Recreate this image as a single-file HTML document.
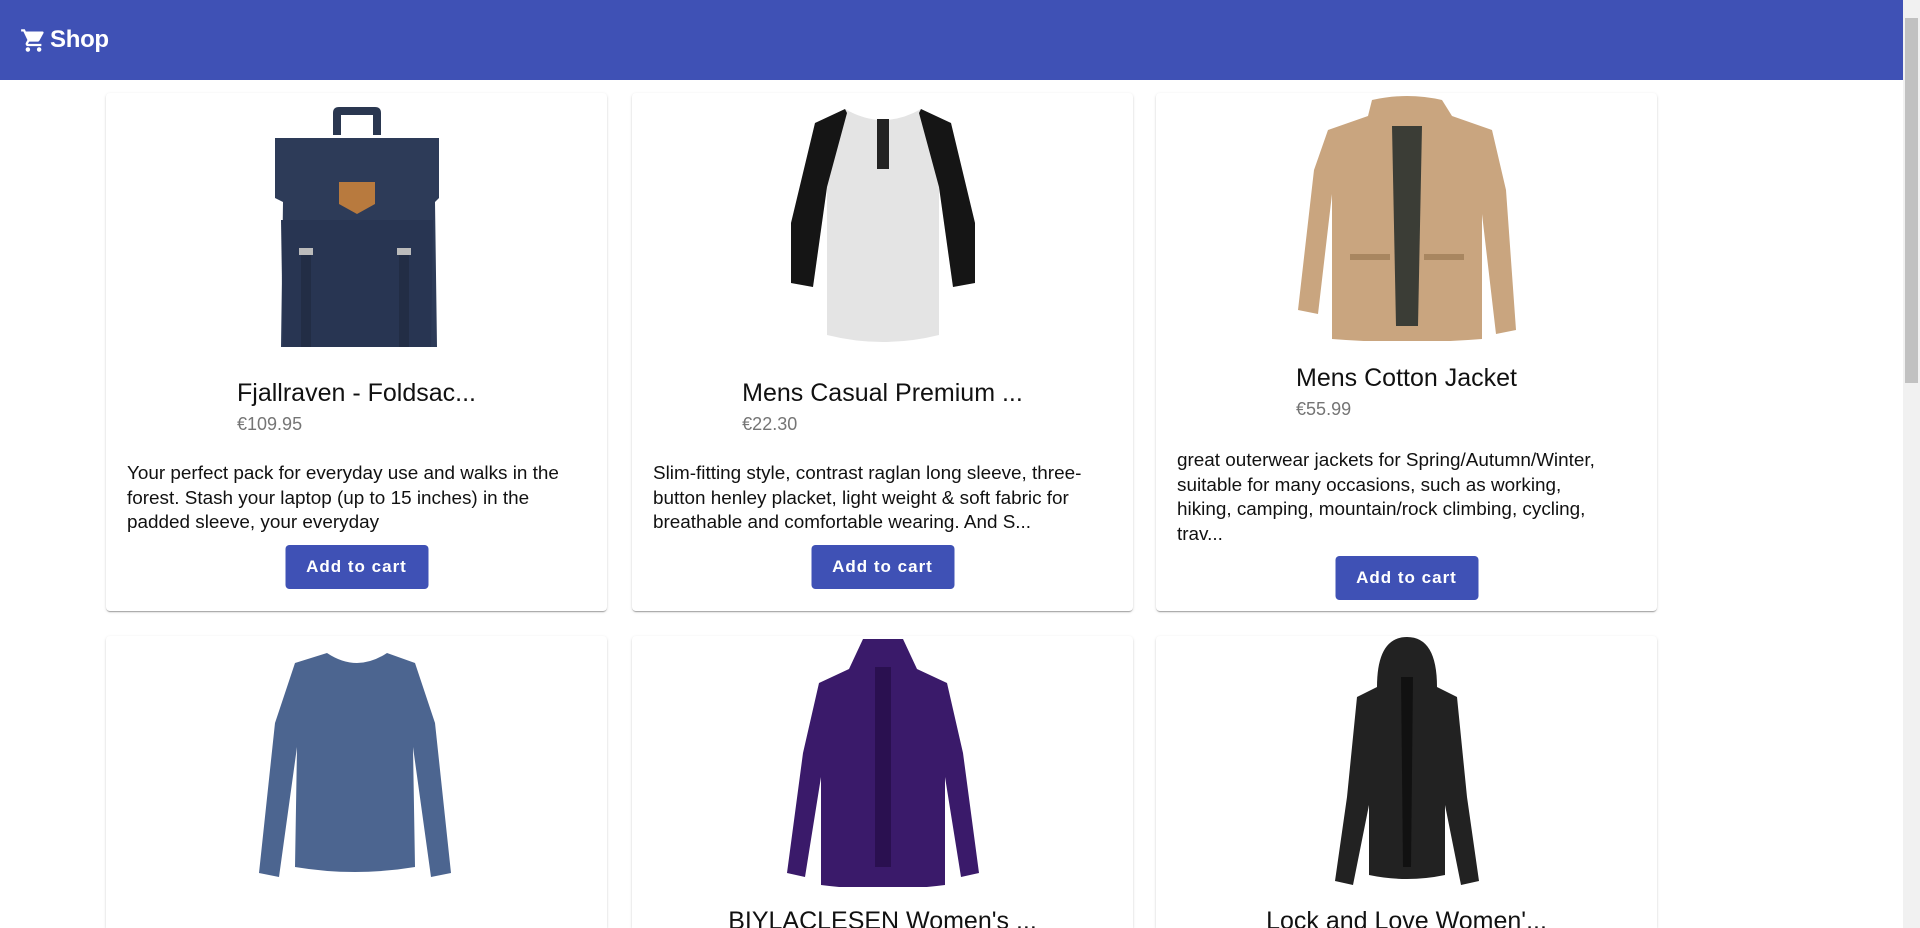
<!DOCTYPE html>
<html><head><meta charset="utf-8">
<style>
*{box-sizing:border-box;margin:0;padding:0}
html,body{width:1920px;height:928px;overflow:hidden;background:#fff;font-family:"Liberation Sans",Arial,sans-serif}
#wrap{position:relative;width:1920px;height:928px;overflow:hidden}
.bar{position:absolute;left:0;top:0;width:1903px;height:80px;background:#3f51b5;color:#fff}
.bar svg{position:absolute;left:20px;top:27px}
.bar span{position:absolute;left:50px;top:26px;font-size:24px;font-weight:bold;letter-spacing:-0.3px}
.sb{position:absolute;right:0;top:0;width:17px;height:928px;background:#f1f1f1}
.sb .th{position:absolute;left:2px;top:18px;width:13px;height:365px;background:#c1c1c1}
.card{position:absolute;width:501px;height:518px;background:#fff;border-radius:4px;box-shadow:0 2px 1px -1px rgba(0,0,0,.2),0 1px 1px 0 rgba(0,0,0,.14),0 1px 3px 0 rgba(0,0,0,.12)}
.card.r2{height:292px;border-radius:4px 4px 0 0}
.img{position:absolute;left:0;width:501px;text-align:center}
.tb{position:absolute;left:0;width:501px;text-align:center}
.tb .in{display:inline-block;text-align:left}
.t{font-size:25px;color:#111;line-height:30px}
.p{font-size:18px;color:#757575;margin-top:6px}
.d{position:absolute;left:21px;right:16px;font-size:18.9px;line-height:24.5px;color:#111}
.btn{position:absolute;left:50%;transform:translateX(-50%);width:143px;height:44px;background:#3f51b5;color:#fff;border-radius:4px;font-size:17px;font-weight:bold;letter-spacing:1px;text-align:center;line-height:44px}
</style></head><body><div id="wrap">
<div class="bar">
<svg width="27" height="27" viewBox="0 0 24 24"><path fill="#fff" d="M7 18c-1.1 0-1.99.9-1.99 2S5.9 22 7 22s2-.9 2-2-.9-2-2-2zM1 2v2h2l3.6 7.59-1.35 2.45c-.16.28-.25.61-.25.96 0 1.1.9 2 2 2h12v-2H7.42c-.14 0-.25-.11-.25-.25l.03-.12.9-1.63h7.45c.75 0 1.41-.41 1.75-1.03l3.58-6.49A1.003 1.003 0 0020 4H5.21l-.94-2H1zm16 16c-1.1 0-1.99.9-1.99 2s.89 2 1.99 2 2-.9 2-2-.9-2-2-2z"/></svg>
<span>Shop</span></div>
<div class="sb"><div class="th"></div></div>

<div class="card" style="left:106px;top:93px">
<div class="img" style="top:12px"><svg width="180" height="252" viewBox="0 0 180 252"><path d="M66 30V8q0-6 6-6h36q6 0 6 6v22h-8V10H74v20z" fill="#2a3750"/><path d="M8 33h164v60l-4 4 2 145H14l2-145-8-4z" fill="#2d3b58"/><path d="M14 115h152l-2 127H16z" fill="#283552"/><rect x="34" y="148" width="10" height="94" fill="#222d45"/><rect x="132" y="148" width="10" height="94" fill="#222d45"/><rect x="32" y="143" width="14" height="7" fill="#bbb"/><rect x="130" y="143" width="14" height="7" fill="#bbb"/><path d="M72 77h36v22l-18 10-18-10z" fill="#b87a3e"/></svg></div>
<div class="tb" style="top:285px"><div class="in"><div class="t">Fjallraven - Foldsac...</div><div class="p">€109.95</div></div></div>
<div class="d" style="top:369px">Your perfect pack for everyday use and walks in the forest. Stash your laptop (up to 15 inches) in the padded sleeve, your everyday</div>
<div class="btn" style="top:452px">Add to cart</div>
</div>

<div class="card" style="left:632px;top:93px">
<div class="img" style="top:12px"><svg width="200" height="252" viewBox="0 0 200 252"><path d="M62 4l-30 14-24 100 0 60 22 4 14-100v148q56 14 112 0V82l14 100 22-4v-60L168 18 138 4q-38 22-76 0z" fill="#e4e4e4"/><path d="M62 4L32 18 8 118v60l22 4 14-100 20-74zM138 4l30 14 24 100v60l-22 4-14-100-20-74z" fill="#151515"/><rect x="94" y="14" width="12" height="50" fill="#222"/></svg></div>
<div class="tb" style="top:285px"><div class="in"><div class="t">Mens Casual Premium ...</div><div class="p">€22.30</div></div></div>
<div class="d" style="top:369px">Slim-fitting style, contrast raglan long sleeve, three-button henley placket, light weight &amp; soft fabric for breathable and comfortable wearing. And S...</div>
<div class="btn" style="top:452px">Add to cart</div>
</div>

<div class="card" style="left:1156px;top:93px">
<div class="img" style="top:3px"><svg width="230" height="245" viewBox="0 0 230 245"><path d="M80 4q35-8 70 0l10 16 40 14 14 60 10 140-20 4-14-120 0 125q-75 6-150 0V98L26 218l-20-4 16-140 14-40 40-14z" fill="#c9a57f"/><path d="M100 30h30l-4 200h-22z" fill="#3b3d36"/><rect x="58" y="158" width="40" height="6" fill="#a88660"/><rect x="132" y="158" width="40" height="6" fill="#a88660"/></svg></div>
<div class="tb" style="top:270px"><div class="in"><div class="t">Mens Cotton Jacket</div><div class="p">€55.99</div></div></div>
<div class="d" style="top:356px;right:40px">great outerwear jackets for Spring/Autumn/Winter, suitable for many occasions, such as working, hiking, camping, mountain/rock climbing, cycling, trav...</div>
<div class="btn" style="top:463px">Add to cart</div>
</div>

<div class="card r2" style="left:106px;top:636px">
<div class="img" style="top:13px"><svg width="200" height="238" viewBox="0 0 200 238"><path d="M70 4q30 20 60 0l28 10 20 60 16 150-20 4-18-130 2 120q-60 10-120 0l2-120-18 130-20-4 16-150 20-60z" fill="#4c6590"/></svg></div>
</div>
<div class="card r2" style="left:632px;top:636px">
<div class="img" style="top:1px"><svg width="200" height="250" viewBox="0 0 200 250"><path d="M80 2h40l14 30 30 14 16 70 16 120-18 4-16-100v108q-62 8-124 0V140L22 240l-18-4 16-120 16-70 30-14z" fill="#3a1a6a"/><rect x="92" y="30" width="16" height="200" fill="#2a1050"/></svg></div>
<div class="tb" style="top:270px"><div class="in"><div class="t">BIYLACLESEN Women's ...</div></div></div>
</div>
<div class="card r2" style="left:1156px;top:636px">
<div class="img" style="top:1px"><svg width="180" height="250" viewBox="0 0 180 250"><path d="M60 50q0-50 30-50t30 50l20 10 10 100 12 84-18 4-16-80v70q-38 8-76 0v-70l-16 80-18-4 12-84 10-100z" fill="#222"/><path d="M84 40h12l-2 190h-8z" fill="#111"/></svg></div>
<div class="tb" style="top:270px"><div class="in"><div class="t">Lock and Love Women'...</div></div></div>
</div>
</div></body></html>
